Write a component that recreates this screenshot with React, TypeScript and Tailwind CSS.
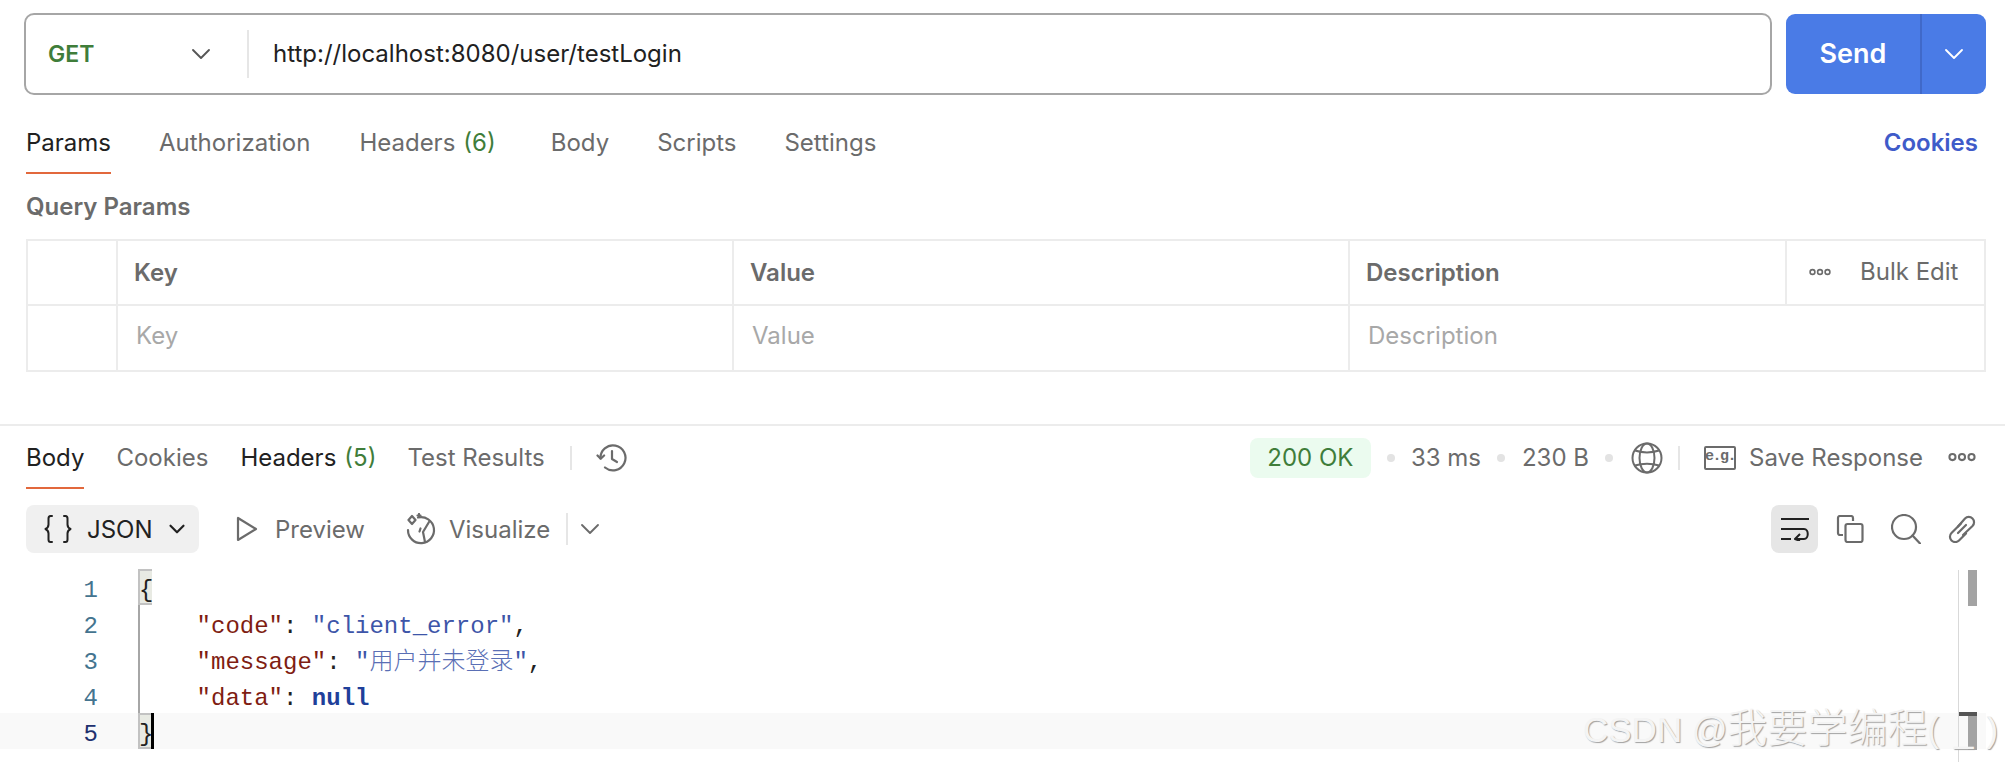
import { ChevronDown } from 'lucide-react';

const sans = "font-['Inter',sans-serif]";
const mono = "font-['Liberation_Mono','Noto_Sans_CJK_SC',monospace]";

function Tab({ label, count, active, dark, ml }: { label: string; count?: number; active?: boolean; dark?: boolean; ml: string }) {
    return (
        <div className={`${ml} relative h-full flex items-center`}>
            <span className={active || dark ? 'text-[#212121]' : 'text-[#6b6b6b]'}>{label}</span>
            {count !== undefined && <span className="ml-[8px] text-[#3f7d3a]">({count})</span>}
            {active && <div className="absolute left-0 right-0 bottom-0 h-[2px] bg-[#e2683c]" />}
        </div>
    );
}

function Dots({ width = 22 }: { width?: number }) {
    return (
        <svg width={width} height={(width * 8) / 22} viewBox="0 0 22 8" fill="none" stroke="#6b6b6b" strokeWidth="1.6">
            <circle cx="3.5" cy="4" r="2.4" />
            <circle cx="11" cy="4" r="2.4" />
            <circle cx="18.5" cy="4" r="2.4" />
        </svg>
    );
}

function Sep() {
    return <div className="w-[8px] h-[8px] rounded-full bg-[#e3e3e3]" />;
}

function CodeLine({ n, active, brace, children }: { n: number; active?: boolean; brace?: boolean; children: React.ReactNode }) {
    return (
        <div className={`flex h-[36px] leading-[44px] ${active ? 'w-[1986px] bg-[#f9f9f9]' : ''}`}>
            <div className={`w-[98px] text-right ${n === 5 ? 'text-[#20306f]' : 'text-[#44748f]'}`}>{n}</div>
            <div className={`ml-[40px] w-[2px] ${brace ? 'bg-transparent' : 'bg-[#a6a6a6]'}`} />
            <div className="relative flex-1 whitespace-pre -ml-[1px]">
                {brace && <div className="absolute left-[-1px] top-0 w-[14px] h-[36px] bg-[#e8eae3] border-[2px] border-r-0 border-[#c2c2c2]" />}
                <span className="relative">{children}</span>
                {active && <div className="absolute left-[12px] top-0 w-[3px] h-[36px] bg-black" />}
            </div>
        </div>
    );
}

const Key = ({ t }: { t: string }) => <span className="text-[#7f1d12]">{t}</span>;
const Str = ({ t }: { t: string }) => <span className="text-[#3d55a8]">{t}</span>;
const Pun = ({ t }: { t: string }) => <span className="text-[#212121]">{t}</span>;

export default function App() {
    return (
        <div className={`${sans} relative w-[2005px] h-[762px] overflow-hidden bg-white text-[24px]`}>
            {/* request bar */}
            <div className="flex pt-[13px] pl-[24px] h-[95px]">
                <div className="flex items-center w-[1748px] h-[82px] border-2 border-[#a6a6a6] rounded-[10px]">
                    <span className="ml-[22px] w-[137px] text-[#3f7d3a] font-semibold text-[23px]">GET</span>
                    <ChevronDown size={32} strokeWidth={1.4} className="text-[#555]" />
                    <div className="ml-[30px] w-[2px] h-[48px] bg-[#e6e6e6]" />
                    <span className="ml-[24px] text-[#212121]">http://localhost:8080/user/testLogin</span>
                </div>
                <div className="ml-[14px] mt-[1px] flex w-[200px] h-[80px] rounded-[9px] bg-[#4a7be6] text-white">
                    <div className="flex-1 flex items-center justify-center border-r-2 border-[#4069c9] font-semibold text-[27px]">Send</div>
                    <div className="w-[64px] flex items-center justify-center">
                        <ChevronDown size={32} strokeWidth={1.4} />
                    </div>
                </div>
            </div>

            {/* request tabs */}
            <div className="flex items-stretch h-[79px] pl-[26px] pt-[16px]">
                <Tab label="Params" active ml="" />
                <Tab label="Authorization" ml="ml-[48px]" />
                <Tab label="Headers" count={6} ml="ml-[49px]" />
                <Tab label="Body" ml="ml-[55px]" />
                <Tab label="Scripts" ml="ml-[48px]" />
                <Tab label="Settings" ml="ml-[48px]" />
                <div className="ml-auto mr-[27px] flex items-center font-semibold text-[#3f5bc9]">Cookies</div>
            </div>

            <div className="pl-[26px] h-[65px] pt-[17px] font-semibold text-[#6b6b6b] leading-[32px]">Query Params</div>

            {/* params table */}
            <div className="ml-[26px] w-[1960px] h-[133px] border-2 border-[#ececec]">
                <div className="flex h-[65px] border-b-2 border-[#ececec]">
                    <div className="w-[90px] border-r-2 border-[#ececec]" />
                    <div className="w-[616px] border-r-2 border-[#ececec] pl-[16px] pt-[1px] flex items-center font-semibold text-[#6b6b6b]">Key</div>
                    <div className="w-[616px] border-r-2 border-[#ececec] pl-[16px] pt-[1px] flex items-center font-semibold text-[#6b6b6b]">Value</div>
                    <div className="w-[437px] border-r-2 border-[#ececec] pl-[16px] pt-[1px] flex items-center font-semibold text-[#6b6b6b]">Description</div>
                    <div className="flex-1 flex items-center pl-[22px] pb-[2px] text-[#6b6b6b]">
                        <Dots />
                        <span className="ml-[29px]">Bulk Edit</span>
                    </div>
                </div>
                <div className="flex h-[64px] text-[#a8a8a8]">
                    <div className="w-[90px] border-r-2 border-[#ececec]" />
                    <div className="w-[616px] border-r-2 border-[#ececec] pl-[18px] pb-[5px] flex items-center">Key</div>
                    <div className="w-[616px] border-r-2 border-[#ececec] pl-[18px] pb-[5px] flex items-center">Value</div>
                    <div className="pl-[18px] pb-[5px] flex items-center">Description</div>
                </div>
            </div>

            <div className="mt-[52px] h-[2px] bg-[#ececec]" />

            {/* response tabs and meta */}
            <div className="flex items-stretch h-[63px] pl-[26px]">
                <Tab label="Body" dark active ml="" />
                <Tab label="Cookies" ml="ml-[32px]" />
                <Tab label="Headers" count={5} dark ml="ml-[32px]" />
                <Tab label="Test Results" ml="ml-[31px]" />
                <div className="ml-[25px] self-center w-[2px] h-[24px] bg-[#e6e6e6]" />
                <svg className="ml-[24px] self-center" width="32" height="32" viewBox="0 0 32 32" fill="none" stroke="#6b6b6b" strokeWidth="2.2" strokeLinecap="round" strokeLinejoin="round">
                    <path d="M4.5 16.5A12.5 12.5 0 1 1 9 25.5" />
                    <path d="M1.5 13.5l3.2 3.2 3.4-3.2" />
                    <path d="M16 9v8l5 3" />
                </svg>
                <div className="ml-auto self-center flex items-center text-[#6b6b6b] pr-[29px]">
                    <span className="w-[121px] h-[40px] rounded-[8px] bg-[#ebfbef] text-[#3f7d3a] flex items-center justify-center">200 OK</span>
                    <div className="ml-[16px]"><Sep /></div>
                    <span className="ml-[16px]">33 ms</span>
                    <div className="ml-[16px]"><Sep /></div>
                    <span className="ml-[17px]">230 B</span>
                    <div className="ml-[16px]"><Sep /></div>
                    <svg className="ml-[18px]" width="32" height="32" viewBox="0 0 32 32" fill="none" stroke="#6b6b6b" strokeWidth="2">
                        <circle cx="16" cy="16" r="14.5" />
                        <ellipse cx="16" cy="16" rx="7.5" ry="14.5" />
                        <path d="M4 8.5c7 2.5 17 2.5 24 0M4 23.5c7-2.5 17-2.5 24 0" />
                    </svg>
                    <div className="ml-[15px] w-[2px] h-[24px] bg-[#e6e6e6]" />
                    <div className="ml-[24px] w-[32px] h-[24px] border-2 border-[#6b6b6b] rounded-[2px] flex items-center justify-center text-[15px] font-bold font-['Liberation_Mono',monospace] tracking-[-1.5px] leading-none pb-[3px]">e.g.</div>
                    <span className="ml-[13px]">Save Response</span>
                    <div className="ml-[25px] flex"><Dots width={28} /></div>
                </div>
            </div>

            {/* response toolbar */}
            <div className="flex items-center h-[48px] mt-[16px] pl-[26px] pr-[29px]">
                <div className="flex items-center w-[173px] h-[48px] rounded-[8px] bg-[#f0f0f0] text-[#212121]">
                    <svg className="ml-[17px]" width="30" height="30" viewBox="0 0 30 30" fill="none" stroke="#212121" strokeWidth="2" strokeLinecap="round" strokeLinejoin="round">
                        <path d="M9 2H7.5C6 2 5.5 3 5.5 4.5v6c0 2-1 3.5-3 4.5 2 1 3 2.500 3 4.500v6C5.500 27 6 28 7.500 28H9" />
                        <path d="M21 2h1.500C24 2 24.500 3 24.500 4.500v6c0 2 1 3.500 3 4.500-2 1-3 2.500-3 4.500v6c0 1.500-.5 2.500-2 2.500H21" />
                    </svg>
                    <span className="ml-[14px] mt-[1px]">JSON</span>
                    <ChevronDown size={26} strokeWidth={2} className="ml-[11px]" />
                </div>
                <svg className="ml-[36px]" width="24" height="28" viewBox="0 0 24 28" fill="none" stroke="#6b6b6b" strokeWidth="2.2" strokeLinejoin="round">
                    <path d="M3 3v22l18-11z" />
                </svg>
                <span className="ml-[16px] mt-[1px] text-[#6b6b6b]">Preview</span>
                <svg className="ml-[40px]" width="32" height="32" viewBox="0 0 32 32" fill="none" stroke="#6b6b6b" strokeWidth="2.2" strokeLinecap="round" strokeLinejoin="round">
                    <path d="M13 4.500A13 13 0 1 1 3 17" />
                    <path d="M24 9l-6 10 2 10" />
                    <path d="M15.500 15.500l-1 3" />
                    <path d="M7 3l3.500 4-3.500 4-3.500-4zM14 1v3M12.500 2.500h3" />
                </svg>
                <span className="ml-[12px] mt-[1px] text-[#6b6b6b]">Visualize</span>
                <div className="ml-[16px] w-[2px] h-[32px] bg-[#e6e6e6]" />
                <ChevronDown size={32} strokeWidth={1.4} className="ml-[6px] text-[#6b6b6b]" />

                <div className="ml-auto flex items-center">
                    <div className="w-[47px] h-[48px] rounded-[8px] bg-[#e6e6e6] flex items-center justify-center">
                        <svg width="28" height="24" viewBox="0 0 28 24" fill="none" stroke="#212121" strokeWidth="2" strokeLinejoin="round">
                            <path d="M0 2h28M0 12h23c5 0 5 10 0 10h-8" />
                            <path d="M0 22h10" />
                            <path d="M19 17l-5 5 5 2" />
                        </svg>
                    </div>
                    <svg className="ml-[18px]" width="28" height="28" viewBox="0 0 28 28" fill="none" stroke="#6b6b6b" strokeWidth="2.2" strokeLinejoin="round">
                        <path d="M7 20H4a2 2 0 0 1-2-2V3a2 2 0 0 1 2-2h11a2 2 0 0 1 2 2v3" />
                        <rect x="9.500" y="9" width="17" height="18" rx="2" />
                    </svg>
                    <svg className="ml-[27px]" width="30" height="30" viewBox="0 0 30 30" fill="none" stroke="#6b6b6b" strokeWidth="2.200" strokeLinecap="round">
                        <circle cx="13" cy="13" r="12" />
                        <path d="M21.500 21.500l7.500 8" />
                    </svg>
                    <svg className="ml-[27px]" width="28" height="28" viewBox="0 0 28 28" fill="none" stroke="#6b6b6b" strokeWidth="2.200" strokeLinecap="round">
                        <path d="M13 8.500L3.500 18a5.300 5.300 0 0 0 7.500 7.500L18 18.500" />
                        <path d="M10 18l8-8" />
                        <path d="M10 11.500L17 3.500a5.300 5.300 0 0 1 7.500 7.500L15 20" />
                    </svg>
                </div>
            </div>

            {/* response body */}
            <div className={`${mono} mt-[16px] text-[24px]`}>
                <CodeLine n={1} brace><Pun t="{" /></CodeLine>
                <CodeLine n={2}><Key t={'    "code"'} /><Pun t=": " /><Str t={'"client_error"'} /><Pun t="," /></CodeLine>
                <CodeLine n={3}><Key t={'    "message"'} /><Pun t=": " /><Str t={'"'} /><span className="font-light text-[#5a6fb5]">用户并未登录</span><Str t={'"'} /><Pun t="," /></CodeLine>
                <CodeLine n={4}><Key t={'    "data"'} /><Pun t=": " /><span className="text-[#1f3f9a] font-bold">null</span></CodeLine>
                <CodeLine n={5} brace active><Pun t="}" /></CodeLine>
            </div>

            {/* scrollbar */}
            <div className="absolute left-[1958px] top-[570px] w-[1px] h-[192px] bg-[#d9d9d9]" />
            <div className="absolute left-[1968px] top-[570px] w-[9px] h-[36px] bg-[#a3a3a3]" />
            <div className="absolute left-[1968px] top-[714px] w-[9px] h-[36px] bg-[#a3a3a3]" />
            <div className="absolute left-[1959px] top-[712px] w-[18px] h-[4px] bg-[#555]" />

            {/* watermark */}
            <div className="absolute left-[1583px] top-[703px] text-[35px] leading-[50px] whitespace-pre font-['Liberation_Sans','Noto_Sans_CJK_SC',sans-serif] font-light text-[#f4f4f4] [text-shadow:1px_1px_1px_#a0a0a0]">CSDN @<span className="text-[40px]">我要学编程</span>(<span className="ml-[15px]">_</span><span className="ml-[13px]">)</span></div>
        </div>
    );
}
